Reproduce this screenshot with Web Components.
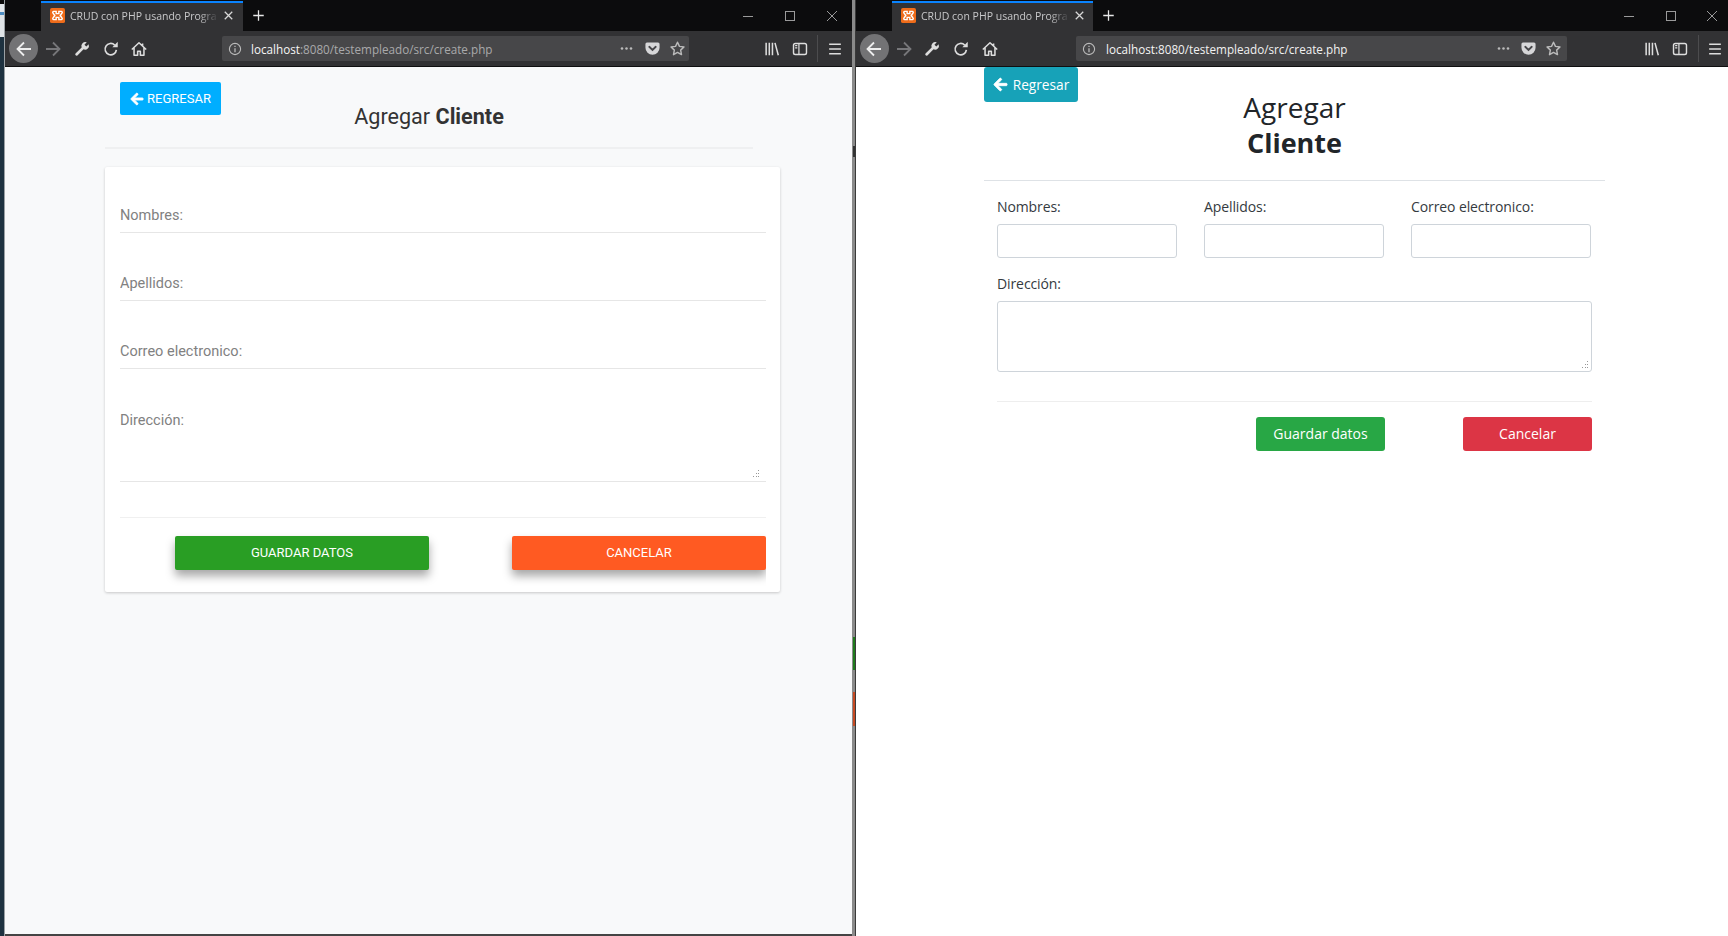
<!DOCTYPE html>
<html lang="es"><head><meta charset="utf-8"><title>CRUD</title>
<style>
html,body{margin:0;height:100%;overflow:hidden;background:#fff}
body{width:1728px;height:936px}
</style></head>
<body>
<desk-top>
  <browser-window slot="left" width="848" variant="md">
    <md-page></md-page>
  </browser-window>
  <browser-window slot="right" width="872" variant="bs">
    <bs-page></bs-page>
  </browser-window>
</desk-top>
<script>
const ICON={
 back:'<path d="M3 10h14M10 3.500 3.500 10l6.500 6.500" fill="none" stroke="currentColor" stroke-width="1.800"/>',
 wrench:'<path d="M17.400 4.700 14.800 7.300 12.700 5.200l2.600-2.600a4.400 4.400 0 0 0-5.700 5.700L2.800 15.100a1.500 1.500 0 0 0 2.100 2.100l6.800-6.800a4.400 4.400 0 0 0 5.700-5.700z" fill="currentColor"/>',
 reload:'<path d="M16 11a6.300 6.300 0 1 1-1.900-5.400" fill="none" stroke="currentColor" stroke-width="1.900"/><path d="M17.500 2v6h-6z" fill="currentColor"/>',
 home:'<path d="M2 10.500 10 3l8 7.500M4.500 8.500V17h4v-4.500h3V17h4V8.500M14 4v3" fill="none" stroke="currentColor" stroke-width="1.700" stroke-linejoin="round"/>',
 info:'<circle cx="10" cy="10" r="7" fill="none" stroke="currentColor" stroke-width="1.400"/><path d="M9.200 9h1.600v5H9.200zM9.200 5.800h1.600v1.600H9.200z" fill="currentColor"/>',
 dots:'<circle cx="4" cy="10" r="1.700" fill="currentColor"/><circle cx="10" cy="10" r="1.700" fill="currentColor"/><circle cx="16" cy="10" r="1.700" fill="currentColor"/>',
 pocket:'<path d="M3.500 3h13a1.800 1.800 0 0 1 1.800 1.800V9A8.300 8.300 0 0 1 1.700 9V4.800A1.800 1.800 0 0 1 3.500 3z" fill="currentColor"/><path d="M6.200 8 10 11.600 13.800 8" fill="none" stroke="#47474a" stroke-width="2.200" stroke-linecap="round"/>',
 star:'<path d="M10 2.600l2.300 4.900 5.300.7-3.900 3.700 1 5.300L10 14.600l-4.700 2.600 1-5.300L2.400 8.200l5.300-.7z" fill="none" stroke="currentColor" stroke-width="1.700" stroke-linejoin="round"/>',
 lib:'<path d="M3.500 3v14M7 3v14M10.500 3v14M13.300 3.200 17 17" fill="none" stroke="currentColor" stroke-width="1.700"/>',
 side:'<rect x="2.800" y="3.800" width="14.400" height="12.400" rx="2" fill="none" stroke="currentColor" stroke-width="1.600"/><path d="M8.800 4v12" stroke="currentColor" stroke-width="1.400"/><path d="M4.600 6.300H7M4.600 8.800H7" stroke="currentColor" stroke-width="1.300"/>',
 menu:'<path d="M3.500 4.800h13M3.500 10h13M3.500 15.200h13" fill="none" stroke="currentColor" stroke-width="1.700"/>',
 close:'<path d="M5 5l10 10M15 5 5 15" fill="none" stroke="currentColor" stroke-width="1.700"/>',
 plus:'<path d="M10 3v14M3 10h14" fill="none" stroke="currentColor" stroke-width="1.700"/>',
 xampp:'<rect width="20" height="20" rx="2.500" fill="#ef6c1a"/><path d="M5 4.500h3.200v3h3.600v-3H15a1.300 1.300 0 0 1 1 2.200L13.600 10 16 13.300a1.300 1.300 0 0 1-1 2.200h-3.200v-3H8.200v3H5a1.300 1.300 0 0 1-1-2.200L6.400 10 4 6.700a1.300 1.300 0 0 1 1-2.200z" fill="none" stroke="#fff" stroke-width="1.900"/>'
};
const svg=(n,s,extra='')=>`<svg width="${s}" height="${s}" viewBox="0 0 20 20" style="display:block;flex:none;${extra}">${ICON[n]}</svg>`;
const arrow=s=>`<svg width="${s}" height="${s}" viewBox="0 0 448 512" style="display:block;flex:none"><path fill="currentColor" stroke="currentColor" stroke-width="28" d="M257.500 445.100l-22.200 22.200c-9.400 9.400-24.600 9.400-33.900 0L7 273c-9.400-9.400-9.400-24.600 0-33.900L201.400 44.700c9.400-9.400 24.600-9.400 33.900 0l22.200 22.200c9.500 9.500 9.300 25-.4 34.300L136.600 216H424c13.300 0 24 10.700 24 24v32c0 13.300-10.700 24-24 24H136.600l120.500 114.800c9.800 9.300 10 24.800.4 34.300z"/></svg>`;
const GRIP='<svg class="grip" width="8" height="8" viewBox="0 0 8 8"><path fill="#999" d="M6 0h1v1H6zM4 3h1v1H4zM6 3h1v1H6zM1 6h1v1H1zM4 6h1v1H4zM6 6h1v1H6z"/></svg>';

class DeskTop extends HTMLElement{constructor(){super();this.attachShadow({mode:'open'}).innerHTML=`<style>
:host{display:flex;width:1728px;height:936px;overflow:hidden}
.strip{width:5px;flex:none;box-sizing:border-box;border-right:1px solid #9aa0a4;background:linear-gradient(#0a0a0a 0 4px,#e4e8ec 4px 12px,#4d8cc0 12px 15px,#dfe3e6 15px 37px,#1e3240 37px)}
.divider{width:4px;flex:none;margin-left:-1px;background:#8a8a8a;border-right:1px solid #3a3a3a;box-sizing:border-box;position:relative;z-index:2;display:flex;flex-direction:column}
.divider i{display:block;width:2px;margin-left:1px;flex:none}
</style>
<div class="strip"></div><slot name="left"></slot>
<div class="divider">
 <i style="margin-top:146px;height:11px;background:#333"></i>
 <i style="margin-top:480px;height:33px;background:#1f7a1c"></i>
 <i style="margin-top:22px;height:34px;background:#c64a22"></i>
</div><slot name="right"></slot>`}}
customElements.define('desk-top',DeskTop);

class BrowserWindow extends HTMLElement{constructor(){super();this.attachShadow({mode:'open'})}
connectedCallback(){const w=this.getAttribute('width'),bs=this.getAttribute('variant')==='bs';
const m=bs?{pad:3.5,fw:5.5,wr:9,re:11,ho:11,url:77,urlw:491,upr:5.5,dot:9,tx:9,lib:76,sl:9,sr:7,wp:9,wg:27.5}
          :{pad:4,fw:5,wr:10,re:11,ho:10,url:74,urlw:467,upr:3.5,dot:10,tx:8,lib:74,sl:8,sr:8,wp:14,wg:28};
this.shadowRoot.innerHTML=`<style>
:host{display:flex;flex-direction:column;flex:none;width:${w}px;height:936px;background:#fff;font-family:"Open Sans","Liberation Sans",sans-serif}
.tabs{height:31px;flex:none;background:#0c0c0d;display:flex;align-items:stretch;padding-left:36px;box-sizing:border-box}
.tab{width:${bs?201:202}px;flex:none;box-sizing:border-box;margin-top:1px;border-top:2px solid #0a84ff;background:#323234;display:flex;align-items:center;padding:0 0 3px 9px;color:#c8c8ca;font-size:10.500px;white-space:nowrap}
.tt{width:146px;flex:none;margin-left:5px;white-space:nowrap;-webkit-mask-image:linear-gradient(90deg,#000 88%,rgba(0,0,0,.15));mask-image:linear-gradient(90deg,#000 88%,rgba(0,0,0,.15))}
.x{margin-left:4.500px;color:#d8d8d8}
.plus{margin:8px 0 0 7.500px;color:#e6e6e6}
.win{margin-left:auto;display:flex;color:#9a9a9a;align-items:center;padding-right:${m.wp}px;gap:${m.wg}px}
.tool{height:36px;flex:none;box-sizing:border-box;background:#323234;border-bottom:1px solid #0f0f10;display:flex;align-items:center;padding-left:${m.pad}px;color:#ddd}
.bk{width:29px;height:29px;border-radius:50%;background:#737375;display:grid;place-items:center;color:#eee;flex:none}
.fw{margin-left:${m.fw}px;color:#77777a}
.wr{margin-left:${m.wr}px}.re{margin-left:${m.re}px}.ho{margin-left:${m.ho}px}
.url{margin-left:${m.url}px;width:${m.urlw}px;height:25px;flex:none;border-radius:2px;background:#474749;display:flex;align-items:center;box-sizing:border-box;padding:0 ${m.upr}px 0 5px;color:#bbb;font-size:11.700px;white-space:nowrap}
.u{margin-left:${m.tx}px;color:${bs?'#f1f1f1':'#a9a9ab'};flex:1;min-width:0}.u b{font-weight:400;color:#f6f6f6}
.url .d{margin-right:${m.dot}px}.url .p{margin-right:8px;color:#d6d6d8}
.sep{width:1px;height:27px;background:#4c4c4e;margin:0 ${m.sr}px 0 ${m.sl}px}
.lib{margin-left:${m.lib}px}.sd{margin-left:10px}
main{flex:1;min-height:0;background:${bs?'#fff':'#f8f9fa'};${bs?'':'border-bottom:2px solid #444;'}}
</style>
<div class="tabs"><div class="tab">${svg('xampp',15)}<span class="tt">CRUD con PHP usando Prograr</span><span class="x">${svg('close',15)}</span></div><span class="plus">${svg('plus',15)}</span>
<div class="win"><svg width="14" height="14" viewBox="0 0 14 14" style="display:block"><path d="M2 7.500h10" stroke="currentColor"/></svg><svg width="14" height="14" viewBox="0 0 14 14" style="display:block"><rect x="2.500" y="2.500" width="9" height="9" fill="none" stroke="currentColor"/></svg><svg width="14" height="14" viewBox="0 0 14 14" style="display:block"><path d="M2 2l10 10M12 2 2 12" stroke="currentColor" fill="none"/></svg></div></div>
<div class="tool"><span class="bk">${svg('back',20)}</span><span class="fw">${svg('back',20,'transform:scaleX(-1);')}</span>
<span class="wr">${svg('wrench',18)}</span><span class="re">${svg('reload',18)}</span><span class="ho">${svg('home',18)}</span>
<div class="url">${svg('info',16)}<span class="u"><b>localhost</b>:8080/testempleado/src/create.php</span><span class="d">${svg('dots',15)}</span><span class="p">${svg('pocket',17)}</span>${svg('star',17)}</div>
<span class="lib">${svg('lib',18)}</span><span class="sd">${svg('side',18)}</span><span class="sep"></span>${svg('menu',18)}</div>
<main><slot></slot></main>`;}}
customElements.define('browser-window',BrowserWindow);

class FormLine extends HTMLElement{constructor(){super();this.attachShadow({mode:'open'}).innerHTML=`<style>
:host{display:block;position:relative;box-sizing:border-box;border-bottom:1px solid #e6e6e6;color:#818181;font:14.500px/40px Roboto,sans-serif;height:var(--h,68px);padding-top:var(--p,31px)}
::slotted(svg){position:absolute;right:6px;bottom:3px}
</style><slot></slot>`}}
customElements.define('form-line',FormLine);

class MdPage extends HTMLElement{constructor(){super();this.attachShadow({mode:'open'}).innerHTML=`<style>
:host{display:block;height:100%;font-family:Roboto,"Liberation Sans",sans-serif;padding:15px 0 0 100px;box-sizing:border-box}
.head{width:648px;height:67px;border-bottom:2px solid #eff0f1;box-sizing:border-box;display:grid}
.head>*{grid-area:1/1}
a{display:flex;align-items:center;justify-content:center;gap:3px;margin-left:15px;width:101px;height:33px;border-radius:2px;background:#00aeff;color:#fff;font-size:13px}
h2{margin:19px 0 0;font:400 21.600px/32px Roboto,sans-serif;color:#333;text-align:center}
h2 b{font-weight:700}
.card{margin-top:18px;width:675px;height:425px;box-sizing:border-box;background:#fff;border-radius:2px;box-shadow:0 1px 3px rgba(0,0,0,.2);padding:0 14px 0 15px}
.clip{height:424px;overflow:hidden}
.n{--h:66px;--p:29px}
.ta{--h:113px;--p:32px}
hr{border:0;border-top:1px solid #f0f0f0;margin:35px 0 18px}
.row{display:grid;grid-template-columns:254px 254px;justify-content:end;column-gap:83px}
button{all:unset;height:34px;box-sizing:border-box;padding-bottom:1px;display:flex;align-items:center;justify-content:center;color:#fff;font:400 13px Roboto,sans-serif;border-radius:2px;box-shadow:0 6px 10px rgba(0,0,0,.35)}
.g{background:#299e24}.o{background:#ff5a22}
</style>
<div class="head"><a>${arrow(14)}REGRESAR</a><h2>Agregar <b>Cliente</b></h2></div>
<div class="card"><div class="clip">
<form-line class="n">Nombres:</form-line>
<form-line>Apellidos:</form-line>
<form-line>Correo electronico:</form-line>
<form-line class="ta">Dirección:${GRIP}</form-line>
<hr>
<div class="row"><button class="g">GUARDAR DATOS</button><button class="o">CANCELAR</button></div>
</div></div>`}}
customElements.define('md-page',MdPage);

class BsField extends HTMLElement{constructor(){super();this.attachShadow({mode:'open'}).innerHTML=`<style>
:host{display:block;font:14px "Open Sans","Liberation Sans",sans-serif;color:#343a40}
label{display:block;line-height:19px;height:28px;padding-top:1px;box-sizing:border-box;letter-spacing:-.1px}
.box{display:block;height:var(--h,34px);box-sizing:border-box;border:1px solid #ced4da;border-radius:3px;background:#fff;position:relative}
svg{position:absolute;right:2px;bottom:2px}
</style><label></label><div class="box"></div>`}
connectedCallback(){this.shadowRoot.querySelector('label').textContent=this.getAttribute('label');if(this.hasAttribute('grip'))this.shadowRoot.querySelector('.box').innerHTML=GRIP}}
customElements.define('bs-field',BsField);

class BsPage extends HTMLElement{constructor(){super();this.attachShadow({mode:'open'}).innerHTML=`<style>
:host{display:block;height:100%;padding-left:128px;box-sizing:border-box;font-family:"Open Sans","Liberation Sans",sans-serif}
.wrap{width:621px}
.head{height:114px;border-bottom:1px solid #dee2e6;box-sizing:border-box}
a{display:flex;align-items:center;justify-content:center;gap:5px;width:94px;height:35px;background:#17a2b8;border-radius:3px;color:#fff;font-size:13.700px}
h2{margin:-12.400px 0 0;text-align:center;font:400 28px/35px "Open Sans",sans-serif;color:#212529}
h2 b{font-size:27px}
.body{padding:15px 13px 0}
.three{display:grid;grid-template-columns:repeat(3,180px);column-gap:27px}
.ta{--h:71px;margin-top:15px}
hr{border:0;border-top:1px solid #eee;margin:29px 0 15px}
.row{display:grid;grid-template-columns:129px 129px;justify-content:end;column-gap:78px}
button{all:unset;height:34px;box-sizing:border-box;padding-bottom:1px;display:flex;align-items:center;justify-content:center;color:#fff;font-size:14px;border-radius:3px}
.g{background:#28a745}.r{background:#dc3545}
</style>
<div class="wrap"><div class="head"><a>${arrow(15)}Regresar</a><h2>Agregar<br><b>Cliente</b></h2></div>
<div class="body"><div class="three"><bs-field label="Nombres:"></bs-field><bs-field label="Apellidos:"></bs-field><bs-field label="Correo electronico:"></bs-field></div>
<bs-field class="ta" label="Dirección:" grip></bs-field>
<hr><div class="row"><button class="g">Guardar datos</button><button class="r">Cancelar</button></div></div></div>`}}
customElements.define('bs-page',BsPage);
</script>
</body></html>
